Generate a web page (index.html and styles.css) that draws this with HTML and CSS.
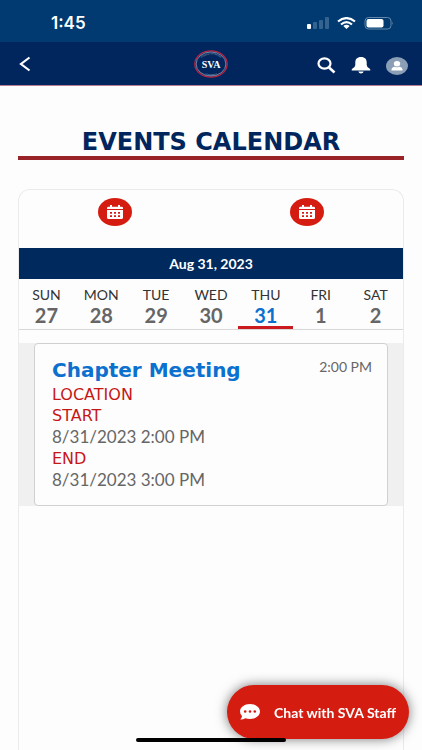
FILE: index.html
```html
<!DOCTYPE html>
<html lang="en">
<head>
<meta charset="utf-8">
<meta name="viewport" content="width=device-width, initial-scale=1">
<title>Events Calendar</title>
<link rel="stylesheet" href="styles.css">
</head>
<body>
<div class="status">
  <span class="clock">1:45</span>
  <div class="status-icons">
    <svg width="22" height="12" viewBox="0 0 22 12" aria-hidden="true">
      <rect x="0" y="7" width="4" height="5" rx="1" fill="#fff"/>
      <g fill="#346390"><rect x="6" y="5" width="4" height="7" rx="1"/><rect x="12" y="3" width="4" height="9" rx="1"/><rect x="18" y="0" width="4" height="12" rx="1"/></g>
    </svg>
    <svg width="19" height="12" viewBox="0 0 19 12" aria-hidden="true">
      <g fill="none" stroke="#fff" stroke-width="2.2"><path d="M1 4.5Q9.500-2.300 18 4.500"/><path d="M4 7.500Q9.500 2.800 15 7.500"/></g>
      <path d="M6.300 9Q9.500 6.700 12.700 9L9.500 12Z" fill="#fff"/>
    </svg>
    <svg width="30" height="13" viewBox="0 0 30 13" aria-hidden="true">
      <rect x="1" y=".5" width="26" height="11.500" rx="3.500" fill="none" stroke="#6587aa"/>
      <rect x="2.500" y="2" width="17" height="8.500" rx="2" fill="#fff"/>
      <path d="M28.300 4.500q1.500 1.700 0 3.500z" fill="#6587aa"/>
    </svg>
  </div>
</div>
<header class="header">
  <button class="icon-button back" aria-label="Back">
    <svg width="12" height="16" viewBox="0 0 12 16"><path d="M10.500 1.500L2 8l8.500 6.500" fill="none" stroke="#fff" stroke-width="2.200"/></svg>
  </button>
  <svg class="logo" width="34" height="28" viewBox="0 0 34 28" role="img" aria-label="SVA">
    <defs>
      <path id="arc-top" d="M4.500 14A12.500 9.500 0 0 1 29.500 14"/>
      <path id="arc-bottom" d="M3 14A14 11.500 0 0 0 31 14"/>
    </defs>
    <ellipse cx="17" cy="14" rx="16.200" ry="13.200" fill="#00265d" stroke="#bc2342" stroke-width="1.300"/>
    <ellipse cx="17" cy="14" rx="14.900" ry="12" fill="none" stroke="#b9c2d5" stroke-width=".6"/>
    <text class="logo-ring"><textPath href="#arc-top" startOffset="50%">STUDENT VETERANS</textPath></text>
    <text class="logo-ring"><textPath href="#arc-bottom" startOffset="50%">OF AMERICA</textPath></text>
    <text class="logo-name" x="17" y="18">SVA</text>
  </svg>
  <div class="actions">
    <button class="icon-button" aria-label="Search">
      <svg width="19" height="17" viewBox="0 0 19 17"><ellipse cx="7.500" cy="6.500" rx="6" ry="5.200" fill="none" stroke="#fff" stroke-width="2.200"/><path d="M12 10.500l5.500 5" stroke="#fff" stroke-width="2.600"/></svg>
    </button>
    <button class="icon-button" aria-label="Notifications">
      <svg width="20" height="17" viewBox="0 0 20 17"><path d="M10 0C6 0 4.300 2.500 4.300 5.200V8Q4.200 10 1.500 11.500Q.5 12.200.7 13.500H19.300Q19.500 12.200 18.500 11.500Q15.800 10 15.700 8V5.200C15.700 2.500 14 0 10 0ZM7.300 14.500H12.700Q12 16.600 10 16.600T7.300 14.500Z" fill="#fff"/></svg>
    </button>
    <button class="icon-button" aria-label="Profile">
      <svg width="22" height="18" viewBox="0 0 22 18"><ellipse cx="11" cy="9" rx="11" ry="9" fill="#8a9fb5"/><ellipse cx="11" cy="6.700" rx="3.200" ry="2.700" fill="#fff"/><path d="M5.500 13.500V12.200Q6 9.700 9 9.700Q11 10.700 13 9.700Q16 9.700 16.500 12.200V13.500Z" fill="#fff"/></svg>
    </button>
  </div>
</header>
<main class="main">
  <h1 class="title">EVENTS CALENDAR</h1>
  <section class="calendar">
    <div class="pickers">
      <button class="picker" aria-label="Start date"><svg width="16" height="14" viewBox="0 0 16 14"><path d="M1.500 1.700H3V0H5V1.700H11V0H13V1.700H14.500Q16 1.700 16 3V4H0V3Q0 1.700 1.500 1.700ZM0 5H16V12.500Q16 14 14.500 14H1.500Q0 14 0 12.500Z" fill="#fff"/><path d="M3 7h2v1.700H3zM7 7h2v1.700H7zM11 7h2v1.700h-2zM3 10.200h2v1.700H3zM7 10.200h2v1.700H7zM11 10.200h2v1.700h-2z" fill="#d51c10"/></svg></button>
      <button class="picker" aria-label="End date"><svg width="16" height="14" viewBox="0 0 16 14"><path d="M1.500 1.700H3V0H5V1.700H11V0H13V1.700H14.500Q16 1.700 16 3V4H0V3Q0 1.700 1.500 1.700ZM0 5H16V12.500Q16 14 14.500 14H1.500Q0 14 0 12.500Z" fill="#fff"/><path d="M3 7h2v1.700H3zM7 7h2v1.700H7zM11 7h2v1.700h-2zM3 10.200h2v1.700H3zM7 10.200h2v1.700H7zM11 10.200h2v1.700h-2z" fill="#d51c10"/></svg></button>
    </div>
    <h2 class="date">Aug 31, 2023</h2>
    <div class="week">
      <button class="day"><span>SUN</span><b>27</b></button>
      <button class="day"><span>MON</span><b>28</b></button>
      <button class="day"><span>TUE</span><b>29</b></button>
      <button class="day"><span>WED</span><b>30</b></button>
      <button class="day selected" aria-current="date"><span>THU</span><b>31</b></button>
      <button class="day"><span>FRI</span><b>1</b></button>
      <button class="day"><span>SAT</span><b>2</b></button>
    </div>
    <div class="events">
      <article class="event">
        <div class="event-head">
          <h3><a href="#">Chapter Meeting</a></h3>
          <time>2:00 PM</time>
        </div>
        <dl class="details">
          <dt>LOCATION</dt>
          <dt>START</dt>
          <dd>8/31/2023 2:00 PM</dd>
          <dt>END</dt>
          <dd>8/31/2023 3:00 PM</dd>
        </dl>
      </article>
    </div>
  </section>
</main>
<button class="chat">
  <svg width="20" height="16" viewBox="0 0 20 16" aria-hidden="true"><path d="M10 0C15.500 0 20 3.200 20 7.500S15.500 15 10 15Q7.500 15 5.300 14.200Q3 15.700.3 15.500Q2 13.800 2 12Q0 10 0 7.500C0 3.200 4.500 0 10 0Z" fill="#fff"/><g fill="#d51c10"><circle cx="5.200" cy="7.500" r="1.300"/><circle cx="10" cy="7.500" r="1.300"/><circle cx="14.800" cy="7.500" r="1.300"/></g></svg>
  <span>Chat with SVA Staff</span>
</button>
<div class="home-indicator"></div>
</body>
</html>
```
FILE: styles.css
```css
* { box-sizing: border-box; }

body {
  margin: 0;
  min-height: 100vh;
  display: flex;
  flex-direction: column;
  background: #fdfdfd;
  color: #333;
  font-family: Lato, sans-serif;
}

h1, h2, h3, dl, dd { margin: 0; }

button {
  border: 0;
  padding: 0;
  background: none;
  color: inherit;
  font: inherit;
  cursor: pointer;
}

svg { display: block; }

.status {
  height: 42px;
  padding: 4px 28px 0 51px;
  display: flex;
  align-items: center;
  justify-content: space-between;
  background: #003a70;
  color: #fff;
}

.clock { font: 600 17px/20px Inter, sans-serif; }

.status-icons {
  display: flex;
  align-items: center;
  gap: 8px;
}

.header {
  height: 44px;
  padding: 0 14px;
  display: grid;
  grid-template-columns: 1fr auto 1fr;
  align-items: center;
  background: #00265d;
  border-bottom: 1px solid #b77c91;
}

.back {
  justify-self: start;
  padding-left: 5px;
}

.logo-name {
  font: bold 10px "Liberation Serif", serif;
  fill: #fff;
  text-anchor: middle;
}

.logo-ring {
  font: 2px "Liberation Sans", sans-serif;
  fill: #b9c2d5;
  text-anchor: middle;
}

.actions {
  padding-top: 4px;
  display: flex;
  align-items: center;
  justify-content: flex-end;
  gap: 15px;
}

.main {
  flex: 1;
  display: flex;
  flex-direction: column;
  padding: 42px 18px 0;
}

.title {
  margin-bottom: 29px;
  border-bottom: 4px solid #982427;
  color: #00265d;
  font: bold 24px/28px "DejaVu Sans", sans-serif;
  text-align: center;
}

.calendar {
  flex: 1;
  border: 1px solid #ebebeb;
  border-bottom: 0;
  border-radius: 12px 12px 0 0;
}

.pickers {
  padding: 8px 0 22px;
  display: grid;
  grid-template-columns: 1fr 1fr;
  justify-items: center;
}

.picker {
  width: 34px;
  height: 28px;
  display: grid;
  place-items: center;
  border-radius: 50%;
  background: #d51c10;
}

.date {
  background: #002a5e;
  color: #fff;
  font-size: 14px;
  line-height: 31px;
  text-align: center;
}

.week {
  display: grid;
  grid-template-columns: repeat(7, 1fr);
  border-bottom: 1px solid #d8d8d8;
}

.day {
  height: 50px;
  padding-top: 4px;
  border-bottom: 3px solid transparent;
  font-size: 14px;
  line-height: 20px;
}

.day span, .day b { display: block; }

.day b {
  color: #666;
  font-size: 20px;
}

.selected { border-bottom-color: #cc1b1e; }
.selected b { color: #0b70ce; }

.events {
  margin-top: 13px;
  padding: 0 15px;
  background: #f0f0f0;
}

.event {
  padding: 12px 15px 14px 17px;
  border: 1px solid #d0d0d0;
  border-radius: 4px;
  background: #fdfdfd;
  color: #666;
}

.event-head {
  display: flex;
  justify-content: space-between;
}

.event-head h3 { font: bold 20px/28px "DejaVu Sans", sans-serif; }

.event-head a {
  color: #0b70ce;
  text-decoration: none;
}

.event-head time {
  padding-top: 2px;
  font-size: 14px;
  line-height: 18px;
}

.details {
  font-size: 17px;
  line-height: 22px;
}

.details dt {
  color: #c61717;
  font: 16px/21px "DejaVu Sans", sans-serif;
}

.chat {
  position: fixed;
  right: 13px;
  bottom: 11px;
  height: 54px;
  padding: 0 13px;
  display: flex;
  align-items: center;
  gap: 14px;
  border-radius: 27px;
  background: #d51c10;
  box-shadow: 0 0 12px #0008;
  color: #fff;
  font-size: 14px;
  font-weight: bold;
}

.home-indicator {
  position: fixed;
  bottom: 8px;
  left: 50%;
  width: 150px;
  height: 4px;
  margin-left: -75px;
  border-radius: 2px;
  background: #000;
}
```
